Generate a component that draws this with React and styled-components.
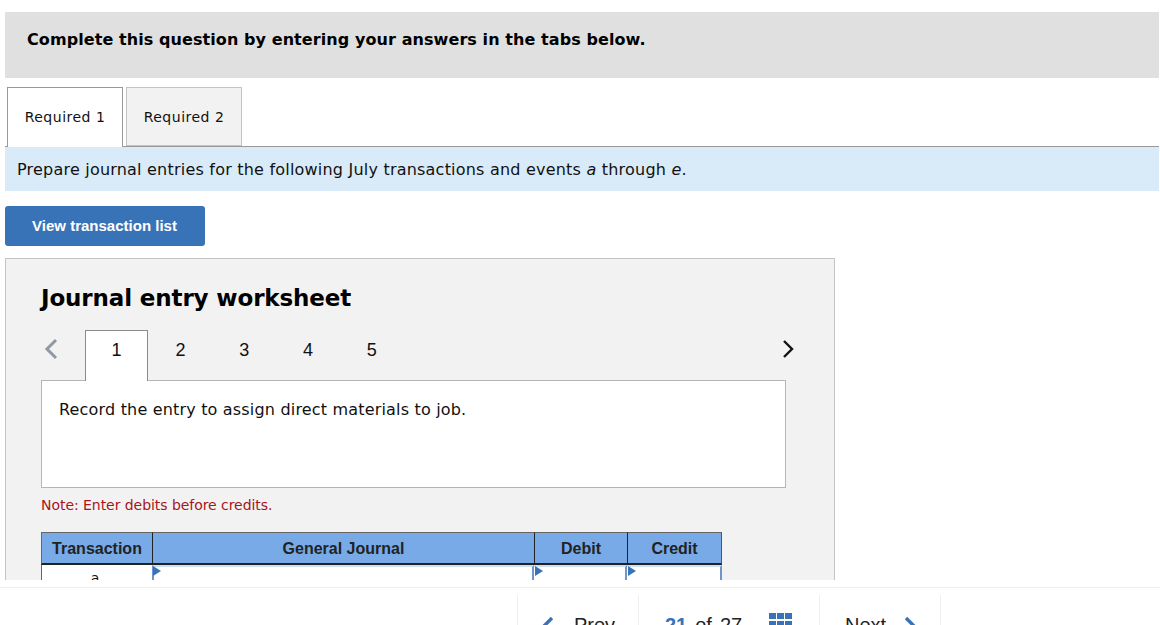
import React from "react";
import styled, { createGlobalStyle } from "styled-components";

const Global = createGlobalStyle`
  html, body { margin: 0; padding: 0; background: #fff; overflow: hidden; }
  body { font-family: "DejaVu Sans", Verdana, sans-serif; color: #111; }
  * { box-sizing: border-box; }
`;
const Page = styled.div`width:1160px;height:625px;display:flex;flex-direction:column;overflow:hidden;`;
const Main = styled.main`height:580px;flex:none;overflow:hidden;padding:12px 1px 0 5px;`;
const Banner = styled.div`height:66px;background:#e0e0e0;padding:18px 22px;font-size:16px;font-weight:700;line-height:20px;color:#000;letter-spacing:.08px;`;
const Tabs = styled.div`display:flex;gap:3px;height:69px;padding:9px 0 0 2px;border-bottom:1px solid #999;`;
const Tab = styled.div`
  width:116px;height:${p=>p.$active?"60px":"59px"};
  border:1px solid ${p=>p.$active?"#999":"#c4c4c4"};
  ${p=>p.$active?"border-bottom:none;padding-bottom:1px;position:relative;z-index:1;":""}
  background:${p=>p.$active?"#fff":"#f2f2f2"};
  display:flex;align-items:center;justify-content:center;
  font-size:14px;letter-spacing:.5px;color:#111;
`;
const Instruction = styled.div`height:44px;background:#d9ebf9;padding:13px 12px;font-size:16px;line-height:20px;letter-spacing:.21px;`;
const ActionButton = styled.div`margin-top:15px;width:200px;height:40px;background:#3973b7;border-radius:3px;color:#fff;display:flex;align-items:center;justify-content:center;padding:0 1px 2px 0;font:700 15px "Liberation Sans",Arial,sans-serif;`;
const Worksheet = styled.section`margin-top:12px;width:830px;height:340px;border:1px solid #c4c4c4;background:#f2f2f2;padding:0 35px;position:relative;`;
const Title = styled.h2`margin:24px 0 0;font-size:23px;line-height:30px;font-weight:700;color:#000;letter-spacing:-.13px;`;
const Stepper = styled.div`margin-top:17px;width:745px;height:50px;display:flex;align-items:flex-start;position:relative;`;
const Arrow = styled.span`position:absolute;top:8px;display:flex;${p=>p.$right?"right:-10px;":"left:3px;"}`;
const Step = styled.div`
  width:63.75px;height:${p=>p.$active?"51px":"39px"};text-align:center;
  font:18px/40px "Liberation Sans",Arial,sans-serif;color:#111;
  ${p=>p.$active?"width:63px;margin-right:.75px;line-height:38px;background:#fff;border:1px solid #8a8a8a;border-bottom:none;position:relative;z-index:1;":""}
  &:first-of-type{margin-left:44px;}
`;
const Prompt = styled.div`width:745px;height:108px;background:#fff;border:1px solid #b5b5b5;padding:19px 17px;font-size:16px;line-height:20px;letter-spacing:.18px;`;
const Note = styled.div`margin-top:8px;font-size:14px;line-height:18px;color:#a8141c;letter-spacing:-.05px;`;
const Table = styled.div`margin-top:18px;width:681px;display:grid;grid-template-columns:111px 382px 93px 95px;`;
const Head = styled.div`
  height:33px;background:#77aae6;border-top:1px solid #666;border-bottom:2px solid #222;border-left:1px solid ${p=>p.$first?"#666":"#222"};
  ${p=>p.$last?"border-right:1px solid #555;":""}
  display:flex;align-items:center;justify-content:center;padding-top:2px;font:700 16px "Liberation Sans",Arial,sans-serif;color:#222;
`;
const Cell = styled.div`height:40px;background:#fff;border-left:1px solid #666;text-align:center;padding:4px 4px 0 0;font-size:14px;line-height:18px;`;
const InputCell = styled.div`height:40px;background:#fff;position:relative;border:solid #6d97cc;border-width:2px 2px 0 ${p=>p.$first?"2px":"0"};border-top-color:#cfe0f5;
  &::before{content:"";position:absolute;left:${p=>p.$first?"-1px":"1px"};top:-1px;border-left:8px solid #3973b7;border-top:5px solid transparent;border-bottom:5px solid transparent;}
`;
const Footer = styled.footer`flex:1;margin-top:7px;border-top:1px solid #eee;display:flex;justify-content:flex-end;padding:7px 219px 0 0;overflow:hidden;`;
const FootItem = styled.div`
  width:${p=>p.$w}px;height:60px;border-left:1px solid #eee;${p=>p.$last?"border-right:1px solid #eee;":""}
  padding-left:${p=>p.$pad}px;padding-top:18px;
  display:flex;align-items:flex-start;gap:${p=>p.$gap||0}px;
  font:20px/24px "Liberation Sans",Arial,sans-serif;color:#222;
`;
const Chevron = styled.svg`margin-top:2px;flex:none;`;
const Num = styled.span`color:#3973b7;font-weight:700;`;
const Of = styled.span`display:flex;gap:8px;`;
const Grid = styled.span`display:grid;grid-template-columns:repeat(3,7px);gap:2px 1px;margin:0 0 0 27px;span{height:6px;background:#3973b7;}`;

export default function App(){
  return <><Global/><Page>
    <Main>
      <Banner>Complete this question by entering your answers in the tabs below.</Banner>
      <Tabs><Tab $active>Required 1</Tab><Tab>Required 2</Tab></Tabs>
      <Instruction>Prepare journal entries for the following July transactions and events <i>a</i> through <i>e</i>.</Instruction>
      <ActionButton>View transaction list</ActionButton>
      <Worksheet>
        <Title>Journal entry worksheet</Title>
        <Stepper>
          <Arrow><svg width="14" height="22" viewBox="0 0 14 22"><path d="M12 2 3 11l9 9" fill="none" stroke="#8f98a3" strokeWidth="3"/></svg></Arrow>
          <Step $active>1</Step><Step>2</Step><Step>3</Step><Step>4</Step><Step>5</Step>
          <Arrow $right><svg width="14" height="22" viewBox="0 0 14 22"><path d="M2 3l8 8-8 8" fill="none" stroke="#111" strokeWidth="2.4"/></svg></Arrow>
        </Stepper>
        <Prompt>Record the entry to assign direct materials to job.</Prompt>
        <Note>Note: Enter debits before credits.</Note>
        <Table>
          <Head $first>Transaction</Head><Head>General Journal</Head><Head>Debit</Head><Head $last>Credit</Head>
          <Cell>a</Cell><InputCell $first/><InputCell/><InputCell/>
        </Table>
      </Worksheet>
    </Main>
    <Footer>
      <FootItem $w={121} $pad={21} $gap={19}><Chevron width="16" height="22" viewBox="0 0 16 22"><path d="M13 3 5 11l8 8" fill="none" stroke="#3973b7" strokeWidth="3.4"/></Chevron>Prev</FootItem>
      <FootItem $w={181} $pad={26}><Of><Num>21</Num><span>of</span><span>27</span></Of><Grid>{Array.from({length:9},(_,i)=><span key={i}/>)}</Grid></FootItem>
      <FootItem $w={122} $last $pad={25} $gap={16}>Next<Chevron width="16" height="22" viewBox="0 0 16 22"><path d="M4 3l8 8-8 8" fill="none" stroke="#3973b7" strokeWidth="3.4"/></Chevron></FootItem>
    </Footer>
  </Page></>;
}
